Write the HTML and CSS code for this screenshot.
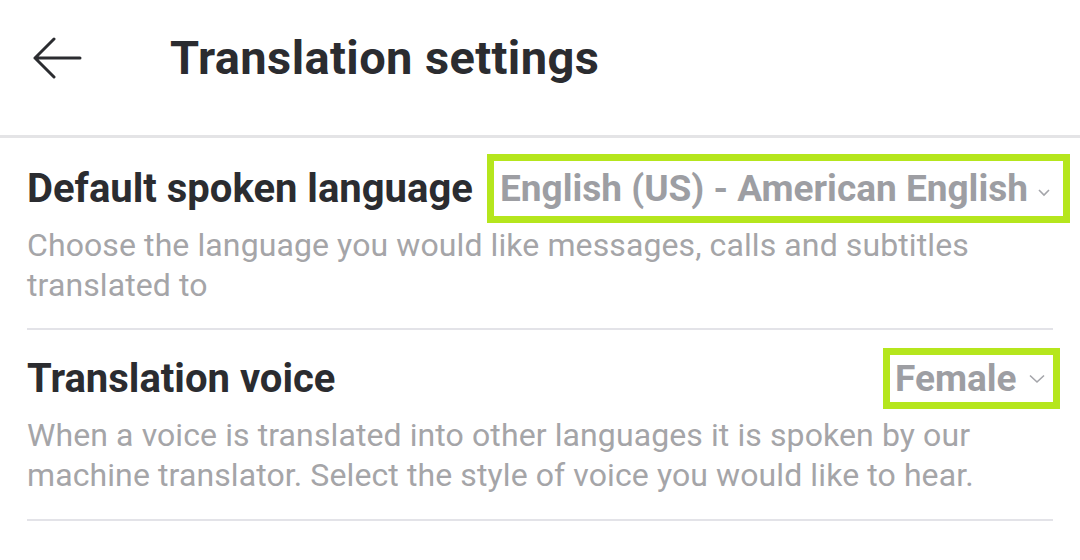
FILE: index.html
```html
<!DOCTYPE html>
<html lang="en">
<head>
<meta charset="utf-8">
<title>Translation settings</title>
<link rel="stylesheet" href="styles.css">
</head>
<body>
<div class="page">
  <header class="topbar">
    <svg class="back" width="50" height="42" viewBox="0 0 50 42" aria-hidden="true">
      <path d="M48 21H3M22 2L3 21L22 40" fill="none" stroke="#2b2c30" stroke-width="3" stroke-linecap="round" stroke-linejoin="round"/>
    </svg>
    <h1 class="title">Translation settings</h1>
  </header>
  <main class="content">
    <section class="setting">
      <div class="setting-head">
        <h2 class="setting-name">Default spoken language</h2>
        <div class="select select-lang">
          <span class="select-value">English (US) - American English</span>
          <svg class="chev chev-small" width="12" height="8" viewBox="0 0 12 8" aria-hidden="true"><path d="M1 1L6 6L11 1" fill="none" stroke="#a4a5aa" stroke-width="1.6"/></svg>
        </div>
      </div>
      <p class="setting-desc">Choose the language you would like messages, calls and subtitles translated to</p>
    </section>
    <section class="setting">
      <div class="setting-head">
        <h2 class="setting-name">Translation voice</h2>
        <div class="select select-voice">
          <span class="select-value">Female</span>
          <svg class="chev" width="16" height="10" viewBox="0 0 16 10" aria-hidden="true"><path d="M1 1.5L8 8L15 1.5" fill="none" stroke="#a4a5aa" stroke-width="1.6"/></svg>
        </div>
      </div>
      <p class="setting-desc">When a voice is translated into other languages it is spoken by our machine translator. Select the style of voice you would like to hear.</p>
    </section>
  </main>
</div>
</body>
</html>
```
FILE: styles.css
```css
* { box-sizing: border-box; }
html, body { margin: 0; padding: 0; background: #ffffff; }
body { font-family: Roboto, "Liberation Sans", Arial, sans-serif; width: 1080px; height: 560px; overflow: hidden; }

.topbar {
  height: 138px;
  display: flex;
  align-items: center;
  padding: 0 0 0 32px;
  border-bottom: 3px solid #e4e4e6;
}
.back { display: block; margin-top: -19px; }
.title {
  margin: -20px 0 0 88px;
  font-size: 47px;
  font-weight: 700;
  color: #2b2c30;
  letter-spacing: 0.4px;
  line-height: 1;
}

.content { padding: 0 27px; }
.setting {
  border-bottom: 2px solid #e3e3e8;
}
.setting-head {
  display: flex;
  align-items: center;
  justify-content: space-between;
}
.setting-name {
  margin: 0;
  font-size: 40px;
  font-weight: 700;
  color: #2b2c30;
}
.select {
  display: flex;
  align-items: center;
  border: 7px solid #b5e61d;
  background: #fff;
}
.select-value {
  font-size: 37px;
  font-weight: 700;
  color: #9d9ea3;
}
.select-lang {
  height: 69px;
  width: 583px;
  margin-right: -17px;
  padding: 0 13px 0 6px;
  justify-content: space-between;
}
.select-voice {
  height: 61px;
  width: 177px;
  margin-right: -7px;
  padding: 0 8px 0 5px;
  justify-content: space-between;
}
.chev-small { margin-top: 8px; }
.setting-desc {
  margin: 0;
  font-size: 32px;
  line-height: 40px;
  color: #a5a5a8;
  letter-spacing: 0.1px;
}
.setting:first-child { padding-top: 16px; padding-bottom: 23px; }
.setting:first-child .setting-desc { margin-top: 2px; }
.setting:last-child { padding-top: 18px; padding-bottom: 24px; }
.setting:last-child .setting-desc { margin-top: 6px; }
```
